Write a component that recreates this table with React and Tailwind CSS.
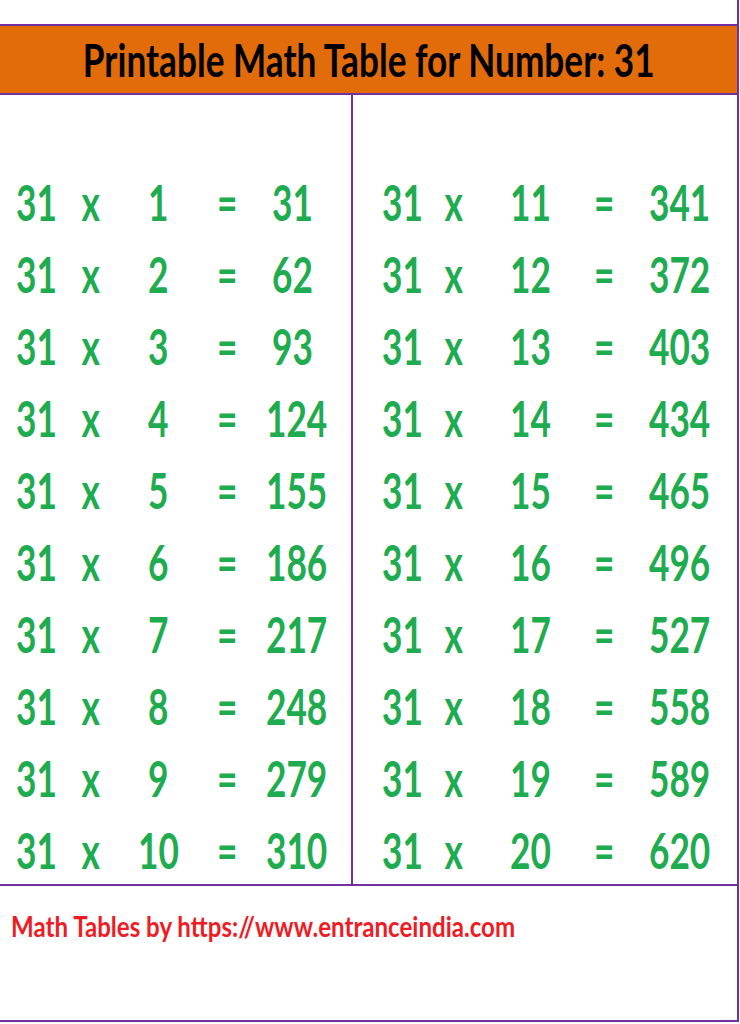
const N = 31;

const LEFT_W = ['w-[60px]', 'w-[50px]', 'w-[84px]', 'w-[54px]', 'w-[76px]'];
const RIGHT_W = ['w-[60px]', 'w-[44px]', 'w-[108px]', 'w-[40px]', 'w-[112px]'];

function Cell({ w, children }) {
  return (
    <div className={`${w} shrink-0 text-center`}>
      <span className="inline-block scale-x-[0.72]">{children}</span>
    </div>
  );
}

function Row({ i, widths }) {
  return (
    <div className="h-[72px] flex items-center">
      <Cell w={widths[0]}>{N}</Cell>
      <Cell w={widths[1]}>x</Cell>
      <Cell w={widths[2]}>{i}</Cell>
      <Cell w={widths[3]}>=</Cell>
      <Cell w={widths[4]}>{N * i}</Cell>
    </div>
  );
}

export default function App() {
  const left = [1, 2, 3, 4, 5, 6, 7, 8, 9, 10];
  const right = [11, 12, 13, 14, 15, 16, 17, 18, 19, 20];
  return (
    <div
      className="w-[740px] h-[1024px] bg-white overflow-hidden"
      style={{ fontFamily: 'Lato, "Open Sans", sans-serif' }}
    >
      <div className="w-[739px] h-[24px] border-r-2 border-[#7030a0]" />
      <div className="w-[739px] border-2 border-l-0 border-[#7030a0]">
        <div className="h-[67px] bg-[#e36c0a] flex items-center justify-center">
          <span className="inline-block whitespace-nowrap scale-x-[0.765] text-[46px] font-bold text-black leading-none">
            Printable Math Table for Number: 31
          </span>
        </div>
        <div className="h-[793px] flex border-y-2 border-[#7030a0] text-[49px] font-bold text-[#1fab4f] leading-none">
          <div className="w-[353px] border-r-2 border-[#7030a0] pt-[71px] pl-[6px]">
            {left.map((i) => (
              <Row key={i} i={i} widths={LEFT_W} />
            ))}
          </div>
          <div className="flex-1 pt-[71px] pl-[19px]">
            {right.map((i) => (
              <Row key={i} i={i} widths={RIGHT_W} />
            ))}
          </div>
        </div>
        <div className="h-[134px] pl-[11px] pt-[26px]">
          <span className="inline-block whitespace-nowrap origin-left scale-x-[0.86] text-[28px] font-bold text-[#ee1c25] leading-none">
            Math Tables by https://www.entranceindia.com
          </span>
        </div>
      </div>
    </div>
  );
}
